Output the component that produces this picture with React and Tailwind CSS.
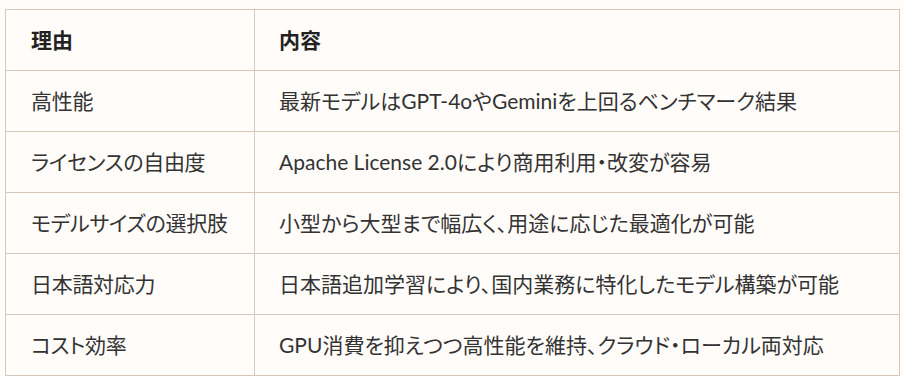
const rows = [
  ['高性能', '最新モデルはGPT-4oやGeminiを上回るベンチマーク結果'],
  ['ライセンスの自由度', 'Apache License 2.0により商用利用・改変が容易'],
  ['モデルサイズの選択肢', '小型から大型まで幅広く、用途に応じた最適化が可能'],
  ['日本語対応力', '日本語追加学習により、国内業務に特化したモデル構築が可能'],
  ['コスト効率', 'GPU消費を抑えつつ高性能を維持、クラウド・ローカル両対応'],
];

const App = () => {
  return (
    <div className="min-h-[376px] w-[903px] bg-[#fffcf9] pt-[9px] pl-[5px] font-['Lato','Noto_Sans_CJK_JP',sans-serif] [font-feature-settings:'palt']">
      <table className="w-[895px] table-fixed border-collapse whitespace-nowrap text-[21px] text-[#333]">
        <thead>
          <tr className="h-[61px]">
            <th className="w-[249px] border border-[#d8c8ba] px-[25px] text-left font-bold text-[#222]">理由</th>
            <th className="border border-[#d8c8ba] px-[24px] text-left font-bold text-[#222]">内容</th>
          </tr>
        </thead>
        <tbody>
          {rows.map(([reason, detail]) => (
            <tr key={reason} className="h-[61px]">
              <td className="border border-[#d8c8ba] px-[25px] tracking-[-0.3px]">{reason}</td>
              <td className="border border-[#d8c8ba] px-[24px]">{detail}</td>
            </tr>
          ))}
        </tbody>
      </table>
    </div>
  );
};

export default App;
